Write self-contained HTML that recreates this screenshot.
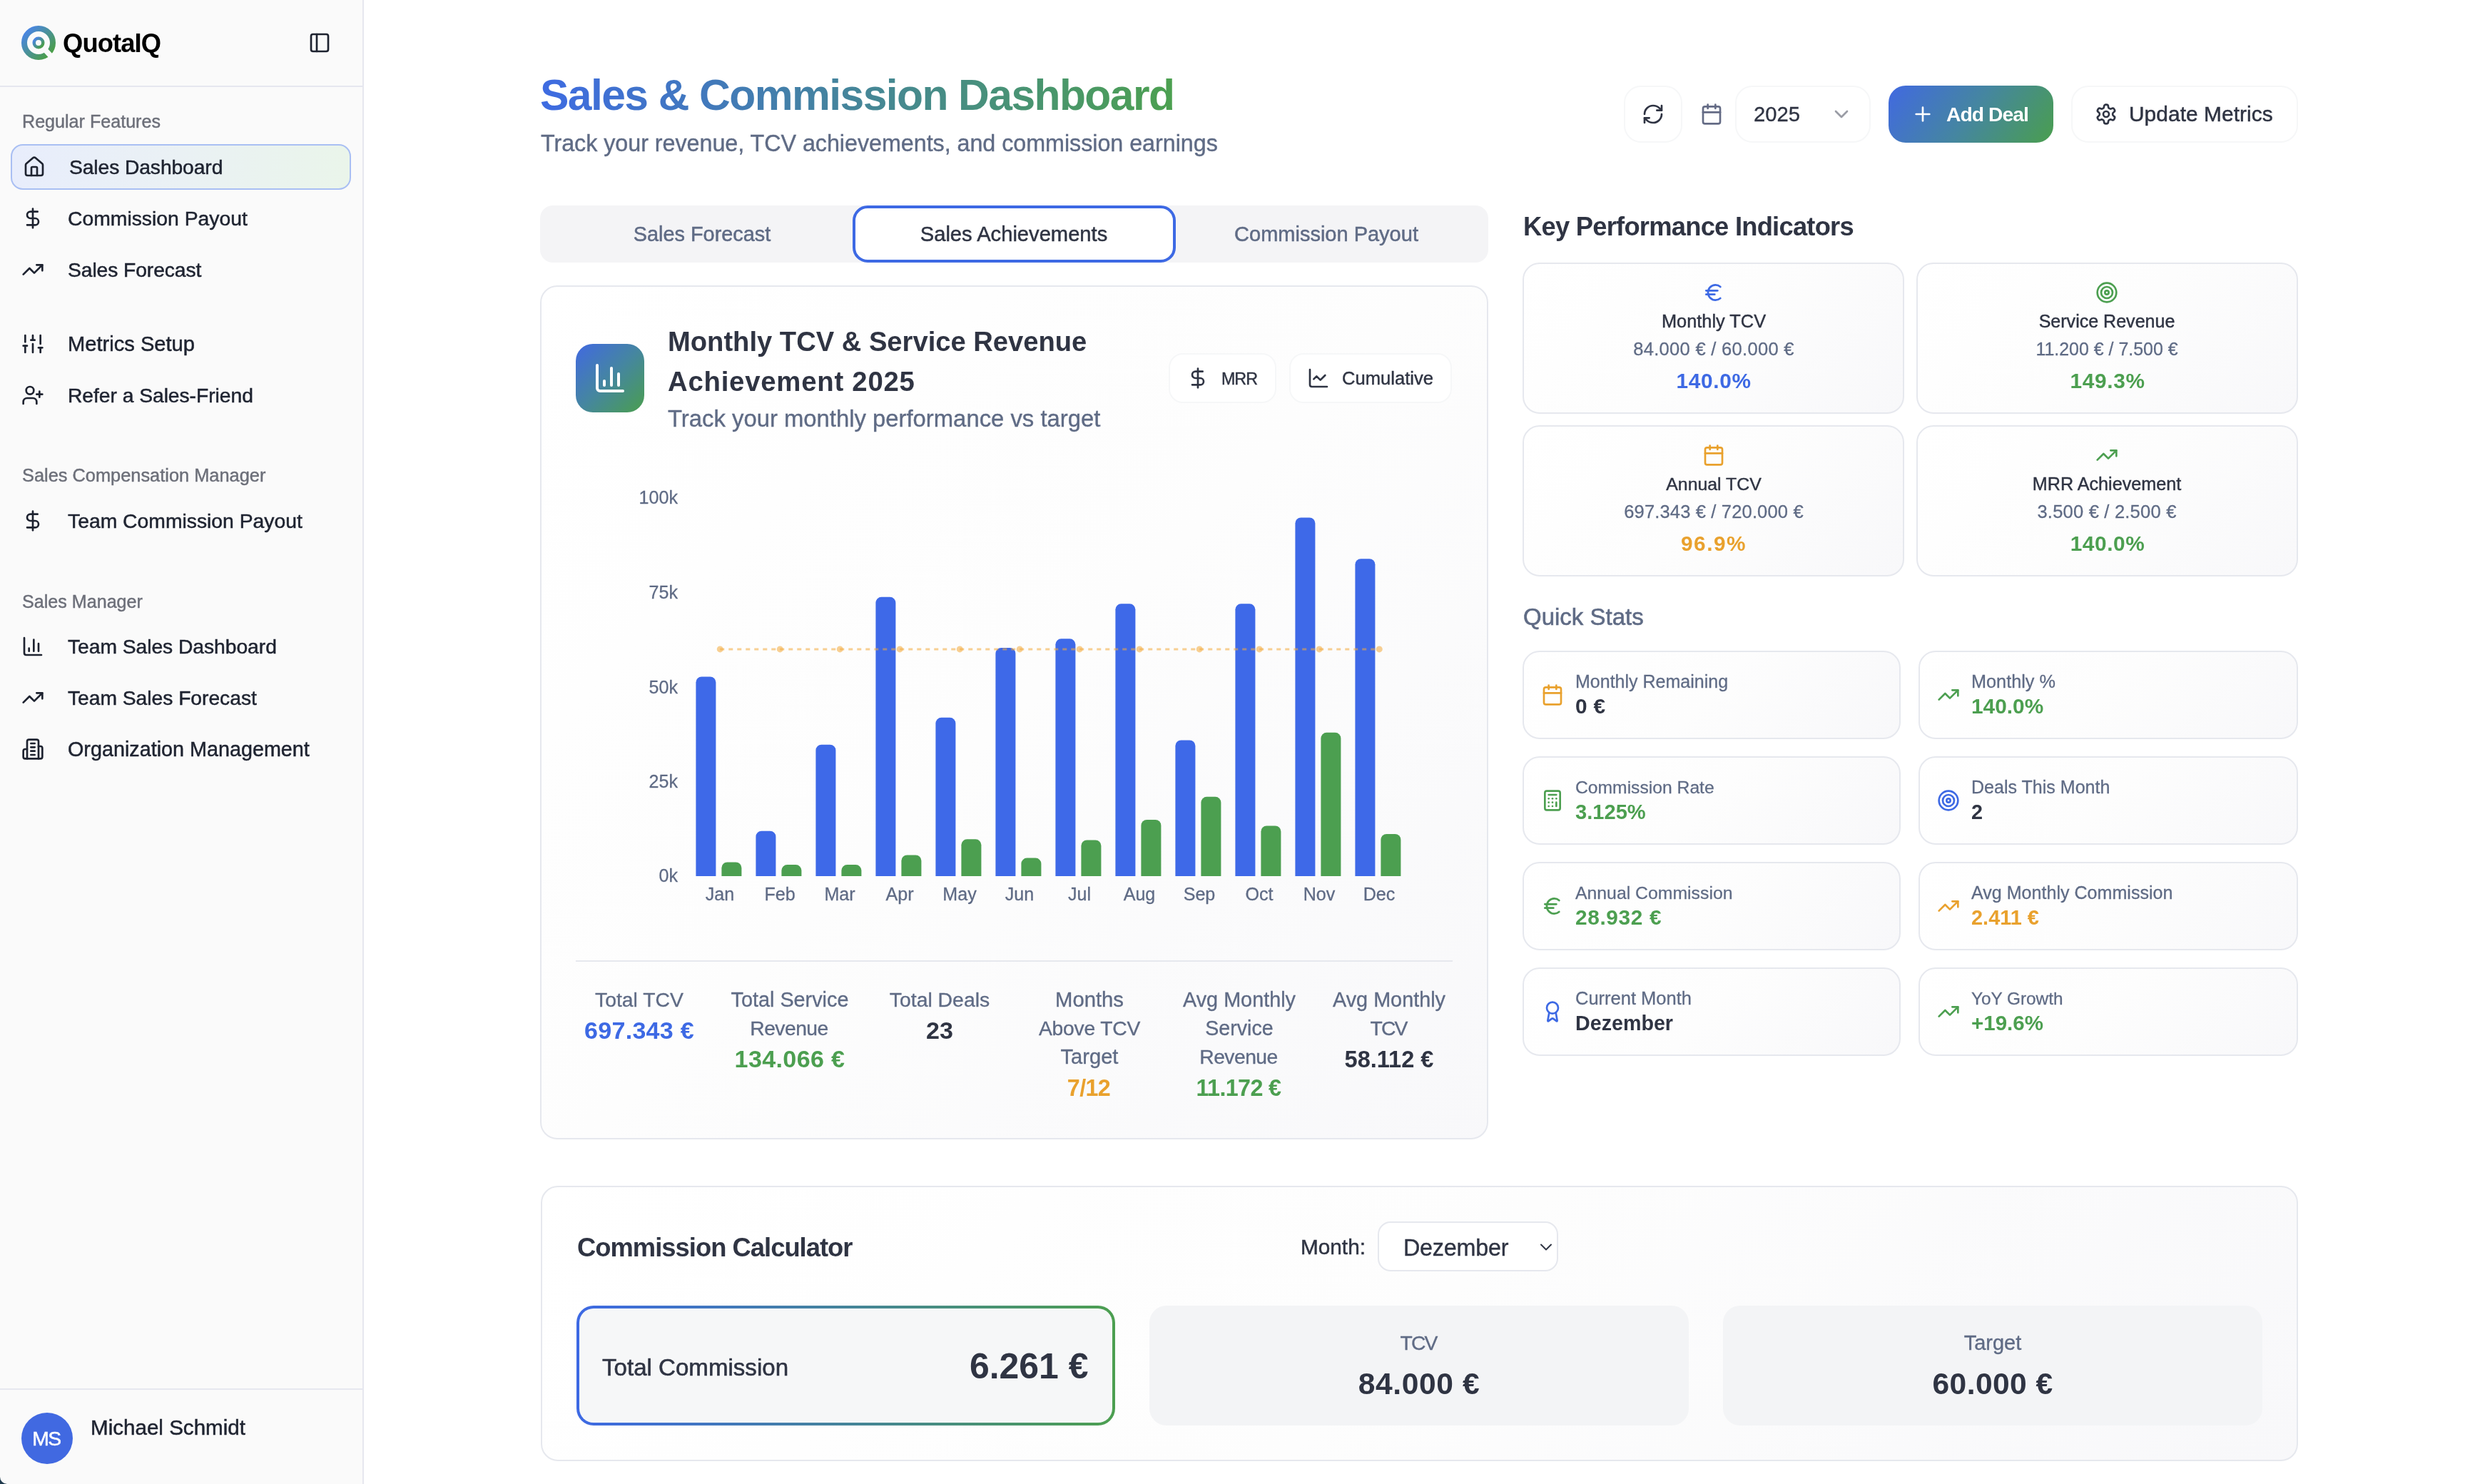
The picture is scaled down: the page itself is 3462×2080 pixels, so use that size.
<!DOCTYPE html>
<html lang="en"><head><meta charset="utf-8"><title>Sales &amp; Commission Dashboard</title>
<style>
html,body{margin:0;padding:0;}
body{width:3462px;height:2080px;position:relative;overflow:hidden;background:#fff;font-family:"Liberation Sans",sans-serif;}
body>div,body>svg,body>span{position:absolute;box-sizing:border-box;}
.t{white-space:nowrap;display:block;will-change:transform;}
</style></head><body>
<div style="left:0px;top:0px;width:510px;height:2080px;background:#fafafa;border-right:2px solid #e6e7ef;"></div><div style="left:0px;top:120px;width:508px;height:2px;background:#e6e7ef;"></div><div style="left:0px;top:1946px;width:508px;height:2px;background:#e6e7ef;"></div><svg style="left:30px;top:36px" width="48" height="48" viewBox="0 0 48 48"><defs><linearGradient id="lg" x1="0.1" y1="0.1" x2="0.9" y2="0.9"><stop offset="0" stop-color="#4a86e0"/><stop offset="1" stop-color="#4a9e48"/></linearGradient></defs><circle cx="24" cy="24" r="20" fill="none" stroke="url(#lg)" stroke-width="8"/><circle cx="24" cy="24" r="6.25" fill="none" stroke="url(#lg)" stroke-width="4.5"/><rect x="36" y="20.2" width="14" height="7.6" fill="#fafafa" transform="rotate(47 24 24)"/></svg><span class="t" style="top:38.00px;font-size:36.36px;line-height:45px;font-weight:700;color:#000;letter-spacing:-0.903px;left:88px;">QuotaIQ</span><svg style="left:431.5px;top:44px;" width="32" height="32" viewBox="0 0 24 24" fill="none" stroke="#1e2330" stroke-width="2" stroke-linecap="round" stroke-linejoin="round"><rect width="18" height="18" x="3" y="3" rx="2"/><path d="M9 3v18"/></svg><span class="t" style="top:154.00px;font-size:25.11px;line-height:32px;font-weight:400;color:#6c6f79;-webkit-text-stroke:0.43px;left:31px;">Regular Features</span><span class="t" style="top:650.00px;font-size:25.39px;line-height:32px;font-weight:400;color:#6c6f79;-webkit-text-stroke:0.43px;left:31px;">Sales Compensation Manager</span><span class="t" style="top:827.00px;font-size:25.12px;line-height:32px;font-weight:400;color:#6c6f79;-webkit-text-stroke:0.43px;left:31px;">Sales Manager</span><div style="left:14.5px;top:202px;width:477px;height:64px;border:2px solid #a9bff3;border-radius:17px;background:linear-gradient(90deg,#e8edfc 0%,#eaf1f4 50%,#eaf5ea 100%);"></div><svg style="left:32px;top:218px;" width="32" height="32" viewBox="0 0 24 24" fill="none" stroke="#1e2330" stroke-width="2" stroke-linecap="round" stroke-linejoin="round"><path d="M15 21v-8a1 1 0 0 0-1-1h-4a1 1 0 0 0-1 1v8"/><path d="M3 10a2 2 0 0 1 .709-1.528l7-5.999a2 2 0 0 1 2.582 0l7 5.999A2 2 0 0 1 21 10v9a2 2 0 0 1-2 2H5a2 2 0 0 1-2-2z"/></svg><span class="t" style="top:216.00px;font-size:28.28px;line-height:36px;font-weight:400;color:#1e2330;letter-spacing:-0.104px;-webkit-text-stroke:0.50px;left:97px;">Sales Dashboard</span><svg style="left:30px;top:290px;" width="32" height="32" viewBox="0 0 24 24" fill="none" stroke="#1e2330" stroke-width="2" stroke-linecap="round" stroke-linejoin="round"><line x1="12" x2="12" y1="2" y2="22"/><path d="M17 5H9.5a3.5 3.5 0 0 0 0 7h5a3.5 3.5 0 0 1 0 7H6"/></svg><span class="t" style="top:288.00px;font-size:28.34px;line-height:36px;font-weight:400;color:#1e2330;-webkit-text-stroke:0.50px;left:95px;">Commission Payout</span><svg style="left:30px;top:362px;" width="32" height="32" viewBox="0 0 24 24" fill="none" stroke="#1e2330" stroke-width="2" stroke-linecap="round" stroke-linejoin="round"><polyline points="22 7 13.5 15.5 8.5 10.5 2 17"/><polyline points="16 7 22 7 22 13"/></svg><span class="t" style="top:360.00px;font-size:28.28px;line-height:36px;font-weight:400;color:#1e2330;letter-spacing:-0.086px;-webkit-text-stroke:0.50px;left:95px;">Sales Forecast</span><svg style="left:30px;top:466px;" width="32" height="32" viewBox="0 0 24 24" fill="none" stroke="#1e2330" stroke-width="2" stroke-linecap="round" stroke-linejoin="round"><line x1="4" x2="4" y1="21" y2="14"/><line x1="4" x2="4" y1="10" y2="3"/><line x1="12" x2="12" y1="21" y2="12"/><line x1="12" x2="12" y1="8" y2="3"/><line x1="20" x2="20" y1="21" y2="16"/><line x1="20" x2="20" y1="12" y2="3"/><line x1="2" x2="6" y1="14" y2="14"/><line x1="10" x2="14" y1="8" y2="8"/><line x1="18" x2="22" y1="16" y2="16"/></svg><span class="t" style="top:464.00px;font-size:29.12px;line-height:36px;font-weight:400;color:#1e2330;-webkit-text-stroke:0.50px;left:95px;">Metrics Setup</span><svg style="left:30px;top:538px;" width="32" height="32" viewBox="0 0 24 24" fill="none" stroke="#1e2330" stroke-width="2" stroke-linecap="round" stroke-linejoin="round"><path d="M16 21v-2a4 4 0 0 0-4-4H6a4 4 0 0 0-4 4v2"/><circle cx="9" cy="7" r="4"/><line x1="19" x2="19" y1="8" y2="14"/><line x1="22" x2="16" y1="11" y2="11"/></svg><span class="t" style="top:536.00px;font-size:28.28px;line-height:36px;font-weight:400;color:#1e2330;letter-spacing:-0.049px;-webkit-text-stroke:0.50px;left:95px;">Refer a Sales-Friend</span><svg style="left:30px;top:714px;" width="32" height="32" viewBox="0 0 24 24" fill="none" stroke="#1e2330" stroke-width="2" stroke-linecap="round" stroke-linejoin="round"><line x1="12" x2="12" y1="2" y2="22"/><path d="M17 5H9.5a3.5 3.5 0 0 0 0 7h5a3.5 3.5 0 0 1 0 7H6"/></svg><span class="t" style="top:712.00px;font-size:28.32px;line-height:36px;font-weight:400;color:#1e2330;-webkit-text-stroke:0.50px;left:95px;">Team Commission Payout</span><svg style="left:30px;top:890px;" width="32" height="32" viewBox="0 0 24 24" fill="none" stroke="#1e2330" stroke-width="2" stroke-linecap="round" stroke-linejoin="round"><path d="M3 3v16a2 2 0 0 0 2 2h16"/><path d="M18 17V9"/><path d="M13 17V5"/><path d="M8 17v-3"/></svg><span class="t" style="top:888.00px;font-size:28.28px;line-height:36px;font-weight:400;color:#1e2330;letter-spacing:-0.050px;-webkit-text-stroke:0.50px;left:95px;">Team Sales Dashboard</span><svg style="left:30px;top:962px;" width="32" height="32" viewBox="0 0 24 24" fill="none" stroke="#1e2330" stroke-width="2" stroke-linecap="round" stroke-linejoin="round"><polyline points="22 7 13.5 15.5 8.5 10.5 2 17"/><polyline points="16 7 22 7 22 13"/></svg><span class="t" style="top:960.00px;font-size:28.28px;line-height:36px;font-weight:400;color:#1e2330;letter-spacing:-0.035px;-webkit-text-stroke:0.50px;left:95px;">Team Sales Forecast</span><svg style="left:30px;top:1034px;" width="32" height="32" viewBox="0 0 24 24" fill="none" stroke="#1e2330" stroke-width="2" stroke-linecap="round" stroke-linejoin="round"><path d="M6 22V4a2 2 0 0 1 2-2h8a2 2 0 0 1 2 2v18Z"/><path d="M6 12H4a2 2 0 0 0-2 2v6a2 2 0 0 0 2 2h2"/><path d="M18 9h2a2 2 0 0 1 2 2v9a2 2 0 0 1-2 2h-2"/><path d="M10 6h4"/><path d="M10 10h4"/><path d="M10 14h4"/><path d="M10 18h4"/></svg><span class="t" style="top:1032.00px;font-size:28.76px;line-height:36px;font-weight:400;color:#1e2330;-webkit-text-stroke:0.50px;left:95px;">Organization Management</span><div style="left:30px;top:1980px;width:72px;height:72px;background:#4169e1;border-radius:50%;"></div><span class="t" style="top:1998.00px;font-size:28.28px;line-height:36px;font-weight:400;color:#fff;letter-spacing:-1.420px;-webkit-text-stroke:0.50px;left:-934.71px;width:2000px;text-align:center;">MS</span><span class="t" style="top:1982.00px;font-size:29.58px;line-height:37px;font-weight:400;color:#1e2330;-webkit-text-stroke:0.50px;left:127px;">Michael Schmidt</span><svg style="left:0;top:2070px" width="10" height="10" viewBox="0 0 20 20"><path d="M0 0 V20 H20 A20 20 0 0 1 0 0Z" fill="#1f3a4d"/></svg><span class="t" style="top:97.00px;font-size:60.60px;line-height:72px;font-weight:700;color:#3d69e4;letter-spacing:-1.586px;left:757px;background:linear-gradient(90deg,#3e6be2 0%,#4ca050 100%);-webkit-background-clip:text;background-clip:text;color:transparent;">Sales &amp; Commission Dashboard</span><span class="t" style="top:181.00px;font-size:32.32px;line-height:40px;font-weight:400;color:#5f6b85;letter-spacing:-0.051px;-webkit-text-stroke:0.38px;left:758px;">Track your revenue, TCV achievements, and commission earnings</span><div style="left:2276px;top:120px;width:82px;height:80px;background:#fff;border:2px solid #f6f7f8;border-radius:24px;"></div><svg style="left:2301px;top:144px;" width="32" height="32" viewBox="0 0 24 24" fill="none" stroke="#2f3443" stroke-width="2" stroke-linecap="round" stroke-linejoin="round"><path d="M3 12a9 9 0 0 1 9-9 9.75 9.75 0 0 1 6.74 2.74L21 8"/><path d="M21 3v5h-5"/><path d="M21 12a9 9 0 0 1-9 9 9.75 9.75 0 0 1-6.74-2.74L3 16"/><path d="M8 16H3v5"/></svg><svg style="left:2383px;top:144px;" width="32" height="32" viewBox="0 0 24 24" fill="none" stroke="#646b85" stroke-width="2" stroke-linecap="round" stroke-linejoin="round"><path d="M8 2v4"/><path d="M16 2v4"/><rect width="18" height="18" x="3" y="4" rx="2"/><path d="M3 10h18"/></svg><div style="left:2432px;top:120px;width:190px;height:80px;background:#fff;border:2px solid #f6f7f8;border-radius:24px;"></div><span class="t" style="top:142.00px;font-size:29.21px;line-height:36px;font-weight:400;color:#2f3443;-webkit-text-stroke:0.34px;left:2458px;">2025</span><svg style="left:2565px;top:144px;" width="32" height="32" viewBox="0 0 24 24" fill="none" stroke="#9a9ca5" stroke-width="2" stroke-linecap="round" stroke-linejoin="round"><path d="m6 9 6 6 6-6"/></svg><div style="left:2647px;top:120px;width:231px;height:80px;background:linear-gradient(125deg,#4169e1 0%,#4586a0 50%,#4a9e4e 100%);border-radius:24px;"></div><svg style="left:2678.6px;top:144px;" width="32" height="32" viewBox="0 0 24 24" fill="none" stroke="#fff" stroke-width="2" stroke-linecap="round" stroke-linejoin="round"><path d="M5 12h14"/><path d="M12 5v14"/></svg><span class="t" style="top:142.00px;font-size:28.28px;line-height:36px;font-weight:700;color:#fff;letter-spacing:-0.939px;left:2728px;">Add Deal</span><div style="left:2902.5px;top:120px;width:318px;height:80px;background:#fff;border:2px solid #f6f7f8;border-radius:24px;"></div><svg style="left:2936px;top:144px;" width="32" height="32" viewBox="0 0 24 24" fill="none" stroke="#2f3443" stroke-width="2" stroke-linecap="round" stroke-linejoin="round"><path d="M12.22 2h-.44a2 2 0 0 0-2 2v.18a2 2 0 0 1-1 1.73l-.43.25a2 2 0 0 1-2 0l-.15-.08a2 2 0 0 0-2.73.73l-.22.38a2 2 0 0 0 .73 2.73l.15.1a2 2 0 0 1 1 1.72v.51a2 2 0 0 1-1 1.74l-.15.09a2 2 0 0 0-.73 2.73l.22.38a2 2 0 0 0 2.73.73l.15-.08a2 2 0 0 1 2 0l.43.25a2 2 0 0 1 1 1.73V20a2 2 0 0 0 2 2h.44a2 2 0 0 0 2-2v-.18a2 2 0 0 1 1-1.73l.43-.25a2 2 0 0 1 2 0l.15.08a2 2 0 0 0 2.73-.73l.22-.39a2 2 0 0 0-.73-2.73l-.15-.08a2 2 0 0 1-1-1.74v-.5a2 2 0 0 1 1-1.74l.15-.09a2 2 0 0 0 .73-2.73l-.22-.38a2 2 0 0 0-2.73-.73l-.15.08a2 2 0 0 1-2 0l-.43-.25a2 2 0 0 1-1-1.73V4a2 2 0 0 0-2-2z"/><circle cx="12" cy="12" r="3"/></svg><span class="t" style="top:141.00px;font-size:29.82px;line-height:37px;font-weight:400;color:#2f3443;letter-spacing:0.090px;-webkit-text-stroke:0.50px;left:2983.7px;">Update Metrics</span><div style="left:757px;top:288px;width:1329px;height:80px;background:#f4f4f6;border-radius:18px;"></div><div style="left:1194.5px;top:288px;width:453px;height:79.5px;background:#fff;border:4px solid #3d69e4;border-radius:21px;"></div><span class="t" style="top:310.00px;font-size:28.86px;line-height:36px;font-weight:400;color:#5f6b85;-webkit-text-stroke:0.50px;left:-16.25px;width:2000px;text-align:center;">Sales Forecast</span><span class="t" style="top:310.00px;font-size:29.17px;line-height:36px;font-weight:400;color:#2f3443;-webkit-text-stroke:0.50px;left:421.00px;width:2000px;text-align:center;">Sales Achievements</span><span class="t" style="top:310.00px;font-size:29.01px;line-height:36px;font-weight:400;color:#5f6b85;-webkit-text-stroke:0.50px;left:859.00px;width:2000px;text-align:center;">Commission Payout</span><div style="left:757px;top:400px;width:1329px;height:1197px;border:2px solid #e6e8ee;border-radius:24px;background:linear-gradient(135deg,#ffffff 0%,#fdfdfd 50%,#f8f8fa 100%);"></div><div style="left:807px;top:482px;width:96px;height:96px;background:linear-gradient(135deg,#4169e1 0%,#4586a0 50%,#4a9e4e 100%);border-radius:24px;"></div><svg style="left:831px;top:506px;" width="48" height="48" viewBox="0 0 24 24" fill="none" stroke="#fff" stroke-width="2" stroke-linecap="round" stroke-linejoin="round"><path d="M3 3v16a2 2 0 0 0 2 2h16"/><path d="M18 17V9"/><path d="M13 17V5"/><path d="M8 17v-3"/></svg><span class="t" style="top:455.00px;font-size:38.17px;line-height:47px;font-weight:700;color:#2f3443;left:936px;">Monthly TCV &amp; Service Revenue</span><span class="t" style="top:511.00px;font-size:38.34px;line-height:47px;font-weight:700;color:#2f3443;letter-spacing:0.759px;left:936px;">Achievement 2025</span><span class="t" style="top:566.00px;font-size:32.85px;line-height:41px;font-weight:400;color:#5f6b85;-webkit-text-stroke:0.38px;left:936px;">Track your monthly performance vs target</span><div style="left:1638px;top:495px;width:151px;height:70px;background:#fff;border:2px solid #f6f7f8;border-radius:20px;"></div><svg style="left:1662.7px;top:514px;" width="32" height="32" viewBox="0 0 24 24" fill="none" stroke="#2f3443" stroke-width="2" stroke-linecap="round" stroke-linejoin="round"><line x1="12" x2="12" y1="2" y2="22"/><path d="M17 5H9.5a3.5 3.5 0 0 0 0 7h5a3.5 3.5 0 0 1 0 7H6"/></svg><span class="t" style="top:516.00px;font-size:23.28px;line-height:30px;font-weight:400;color:#2f3443;letter-spacing:-1.008px;-webkit-text-stroke:0.43px;left:1712px;">MRR</span><div style="left:1807px;top:495px;width:228px;height:70px;background:#fff;border:2px solid #f6f7f8;border-radius:20px;"></div><svg style="left:1832px;top:514px;" width="32" height="32" viewBox="0 0 24 24" fill="none" stroke="#2f3443" stroke-width="2" stroke-linecap="round" stroke-linejoin="round"><path d="M3 3v16a2 2 0 0 0 2 2h16"/><path d="m19 9-5 5-4-4-3 3"/></svg><span class="t" style="top:514.00px;font-size:25.56px;line-height:32px;font-weight:400;color:#2f3443;letter-spacing:0.017px;-webkit-text-stroke:0.43px;left:1880.75px;">Cumulative</span><span class="t" style="top:1211.00px;font-size:25.08px;line-height:32px;font-weight:400;color:#5f6b85;-webkit-text-stroke:0.29px;left:-1050.00px;width:2000px;text-align:right;">0k</span><span class="t" style="top:1079.00px;font-size:25.08px;line-height:32px;font-weight:400;color:#5f6b85;-webkit-text-stroke:0.29px;left:-1050.00px;width:2000px;text-align:right;">25k</span><span class="t" style="top:947.00px;font-size:25.08px;line-height:32px;font-weight:400;color:#5f6b85;-webkit-text-stroke:0.29px;left:-1050.00px;width:2000px;text-align:right;">50k</span><span class="t" style="top:814.00px;font-size:25.08px;line-height:32px;font-weight:400;color:#5f6b85;-webkit-text-stroke:0.29px;left:-1050.00px;width:2000px;text-align:right;">75k</span><span class="t" style="top:681.00px;font-size:25.08px;line-height:32px;font-weight:400;color:#5f6b85;-webkit-text-stroke:0.29px;left:-1050.00px;width:2000px;text-align:right;">100k</span><svg style="left:0;top:0" width="3462" height="2080" viewBox="0 0 3462 2080"><path d="M975.4 1228V956.4a8 8 0 0 1 8 -8h12a8 8 0 0 1 8 8V1228Z" fill="#3e69e8"/><path d="M1011.4 1228V1216.4a8 8 0 0 1 8 -8h12a8 8 0 0 1 8 8V1228Z" fill="#4c9f50"/><path d="M1059.4 1228V1172.7a8 8 0 0 1 8 -8h12a8 8 0 0 1 8 8V1228Z" fill="#3e69e8"/><path d="M1095.4 1228V1220.1a8 8 0 0 1 8 -8h12a8 8 0 0 1 8 8V1228Z" fill="#4c9f50"/><path d="M1143.4 1228V1051.7a8 8 0 0 1 8 -8h12a8 8 0 0 1 8 8V1228Z" fill="#3e69e8"/><path d="M1179.4 1228V1220.1a8 8 0 0 1 8 -8h12a8 8 0 0 1 8 8V1228Z" fill="#4c9f50"/><path d="M1227.4 1228V844.8a8 8 0 0 1 8 -8h12a8 8 0 0 1 8 8V1228Z" fill="#3e69e8"/><path d="M1263.4 1228V1206.4a8 8 0 0 1 8 -8h12a8 8 0 0 1 8 8V1228Z" fill="#4c9f50"/><path d="M1311.4 1228V1013.8a8 8 0 0 1 8 -8h12a8 8 0 0 1 8 8V1228Z" fill="#3e69e8"/><path d="M1347.4 1228V1184.3a8 8 0 0 1 8 -8h12a8 8 0 0 1 8 8V1228Z" fill="#4c9f50"/><path d="M1395.4 1228V915.9a8 8 0 0 1 8 -8h12a8 8 0 0 1 8 8V1228Z" fill="#3e69e8"/><path d="M1431.4 1228V1210.6a8 8 0 0 1 8 -8h12a8 8 0 0 1 8 8V1228Z" fill="#4c9f50"/><path d="M1479.4 1228V903.3a8 8 0 0 1 8 -8h12a8 8 0 0 1 8 8V1228Z" fill="#3e69e8"/><path d="M1515.4 1228V1185.4a8 8 0 0 1 8 -8h12a8 8 0 0 1 8 8V1228Z" fill="#4c9f50"/><path d="M1563.4 1228V854.3a8 8 0 0 1 8 -8h12a8 8 0 0 1 8 8V1228Z" fill="#3e69e8"/><path d="M1599.4 1228V1156.9a8 8 0 0 1 8 -8h12a8 8 0 0 1 8 8V1228Z" fill="#4c9f50"/><path d="M1647.4 1228V1045.4a8 8 0 0 1 8 -8h12a8 8 0 0 1 8 8V1228Z" fill="#3e69e8"/><path d="M1683.4 1228V1124.8a8 8 0 0 1 8 -8h12a8 8 0 0 1 8 8V1228Z" fill="#4c9f50"/><path d="M1731.4 1228V854.3a8 8 0 0 1 8 -8h12a8 8 0 0 1 8 8V1228Z" fill="#3e69e8"/><path d="M1767.4 1228V1165.4a8 8 0 0 1 8 -8h12a8 8 0 0 1 8 8V1228Z" fill="#4c9f50"/><path d="M1815.4 1228V733.5a8 8 0 0 1 8 -8h12a8 8 0 0 1 8 8V1228Z" fill="#3e69e8"/><path d="M1851.4 1228V1034.8a8 8 0 0 1 8 -8h12a8 8 0 0 1 8 8V1228Z" fill="#4c9f50"/><path d="M1899.4 1228V791.2a8 8 0 0 1 8 -8h12a8 8 0 0 1 8 8V1228Z" fill="#3e69e8"/><path d="M1935.4 1228V1177.0a8 8 0 0 1 8 -8h12a8 8 0 0 1 8 8V1228Z" fill="#4c9f50"/><path d="M1009.25 909.9H1933.25" stroke="#f2a93b" stroke-opacity="0.55" stroke-width="3" stroke-dasharray="6 6" fill="none"/><circle cx="1009.25" cy="909.9" r="4.5" fill="#f2a93b" fill-opacity="0.55"/><circle cx="1093.25" cy="909.9" r="4.5" fill="#f2a93b" fill-opacity="0.55"/><circle cx="1177.25" cy="909.9" r="4.5" fill="#f2a93b" fill-opacity="0.55"/><circle cx="1261.25" cy="909.9" r="4.5" fill="#f2a93b" fill-opacity="0.55"/><circle cx="1345.25" cy="909.9" r="4.5" fill="#f2a93b" fill-opacity="0.55"/><circle cx="1429.25" cy="909.9" r="4.5" fill="#f2a93b" fill-opacity="0.55"/><circle cx="1513.25" cy="909.9" r="4.5" fill="#f2a93b" fill-opacity="0.55"/><circle cx="1597.25" cy="909.9" r="4.5" fill="#f2a93b" fill-opacity="0.55"/><circle cx="1681.25" cy="909.9" r="4.5" fill="#f2a93b" fill-opacity="0.55"/><circle cx="1765.25" cy="909.9" r="4.5" fill="#f2a93b" fill-opacity="0.55"/><circle cx="1849.25" cy="909.9" r="4.5" fill="#f2a93b" fill-opacity="0.55"/><circle cx="1933.25" cy="909.9" r="4.5" fill="#f2a93b" fill-opacity="0.55"/></svg><span class="t" style="top:1237.00px;font-size:25.08px;line-height:32px;font-weight:400;color:#5f6b85;-webkit-text-stroke:0.29px;left:9.00px;width:2000px;text-align:center;">Jan</span><span class="t" style="top:1237.00px;font-size:25.08px;line-height:32px;font-weight:400;color:#5f6b85;-webkit-text-stroke:0.29px;left:93.00px;width:2000px;text-align:center;">Feb</span><span class="t" style="top:1237.00px;font-size:25.08px;line-height:32px;font-weight:400;color:#5f6b85;-webkit-text-stroke:0.29px;left:177.00px;width:2000px;text-align:center;">Mar</span><span class="t" style="top:1237.00px;font-size:25.08px;line-height:32px;font-weight:400;color:#5f6b85;-webkit-text-stroke:0.29px;left:261.00px;width:2000px;text-align:center;">Apr</span><span class="t" style="top:1237.00px;font-size:25.08px;line-height:32px;font-weight:400;color:#5f6b85;-webkit-text-stroke:0.29px;left:345.00px;width:2000px;text-align:center;">May</span><span class="t" style="top:1237.00px;font-size:25.08px;line-height:32px;font-weight:400;color:#5f6b85;-webkit-text-stroke:0.29px;left:429.00px;width:2000px;text-align:center;">Jun</span><span class="t" style="top:1237.00px;font-size:25.08px;line-height:32px;font-weight:400;color:#5f6b85;-webkit-text-stroke:0.29px;left:513.00px;width:2000px;text-align:center;">Jul</span><span class="t" style="top:1237.00px;font-size:25.08px;line-height:32px;font-weight:400;color:#5f6b85;-webkit-text-stroke:0.29px;left:597.00px;width:2000px;text-align:center;">Aug</span><span class="t" style="top:1237.00px;font-size:25.08px;line-height:32px;font-weight:400;color:#5f6b85;-webkit-text-stroke:0.29px;left:681.00px;width:2000px;text-align:center;">Sep</span><span class="t" style="top:1237.00px;font-size:25.08px;line-height:32px;font-weight:400;color:#5f6b85;-webkit-text-stroke:0.29px;left:765.00px;width:2000px;text-align:center;">Oct</span><span class="t" style="top:1237.00px;font-size:25.08px;line-height:32px;font-weight:400;color:#5f6b85;-webkit-text-stroke:0.29px;left:849.00px;width:2000px;text-align:center;">Nov</span><span class="t" style="top:1237.00px;font-size:25.08px;line-height:32px;font-weight:400;color:#5f6b85;-webkit-text-stroke:0.29px;left:933.00px;width:2000px;text-align:center;">Dec</span><div style="left:807px;top:1346px;width:1229px;height:2px;background:#e6e8ee;"></div><span class="t" style="top:1383.00px;font-size:28.32px;line-height:36px;font-weight:400;color:#5f6b85;letter-spacing:0.000px;-webkit-text-stroke:0.34px;left:-103.70px;width:2000px;text-align:center;">Total TCV</span><span class="t" style="top:1423.00px;font-size:34.08px;line-height:42px;font-weight:700;color:#3d69e4;letter-spacing:0.248px;left:-103.58px;width:2000px;text-align:center;">697.343 €</span><span class="t" style="top:1383.00px;font-size:28.82px;line-height:36px;font-weight:400;color:#5f6b85;-webkit-text-stroke:0.34px;left:106.50px;width:2000px;text-align:center;">Total Service</span><span class="t" style="top:1423.00px;font-size:28.28px;line-height:36px;font-weight:400;color:#5f6b85;letter-spacing:-0.536px;-webkit-text-stroke:0.34px;left:106.23px;width:2000px;text-align:center;">Revenue</span><span class="t" style="top:1463.00px;font-size:34.08px;line-height:42px;font-weight:700;color:#4c9f50;letter-spacing:0.361px;left:106.68px;width:2000px;text-align:center;">134.066 €</span><span class="t" style="top:1383.00px;font-size:28.40px;line-height:36px;font-weight:400;color:#5f6b85;-webkit-text-stroke:0.34px;left:316.70px;width:2000px;text-align:center;">Total Deals</span><span class="t" style="top:1423.00px;font-size:34.08px;line-height:42px;font-weight:700;color:#2f3443;letter-spacing:0.093px;left:316.75px;width:2000px;text-align:center;">23</span><span class="t" style="top:1383.00px;font-size:29.27px;line-height:36px;font-weight:400;color:#5f6b85;-webkit-text-stroke:0.34px;left:526.70px;width:2000px;text-align:center;">Months</span><span class="t" style="top:1423.00px;font-size:28.28px;line-height:36px;font-weight:400;color:#5f6b85;letter-spacing:-0.200px;-webkit-text-stroke:0.34px;left:526.60px;width:2000px;text-align:center;">Above TCV</span><span class="t" style="top:1463.00px;font-size:29.14px;line-height:36px;font-weight:400;color:#5f6b85;-webkit-text-stroke:0.34px;left:526.70px;width:2000px;text-align:center;">Target</span><span class="t" style="top:1505.00px;font-size:32.32px;line-height:40px;font-weight:700;color:#e9a12d;letter-spacing:-0.635px;left:526.38px;width:2000px;text-align:center;">7/12</span><span class="t" style="top:1383.00px;font-size:28.81px;line-height:36px;font-weight:400;color:#5f6b85;-webkit-text-stroke:0.34px;left:736.70px;width:2000px;text-align:center;">Avg Monthly</span><span class="t" style="top:1423.00px;font-size:28.64px;line-height:36px;font-weight:400;color:#5f6b85;-webkit-text-stroke:0.34px;left:736.70px;width:2000px;text-align:center;">Service</span><span class="t" style="top:1463.00px;font-size:28.28px;line-height:36px;font-weight:400;color:#5f6b85;letter-spacing:-0.536px;-webkit-text-stroke:0.34px;left:736.43px;width:2000px;text-align:center;">Revenue</span><span class="t" style="top:1505.00px;font-size:32.32px;line-height:40px;font-weight:700;color:#4c9f50;letter-spacing:-0.646px;left:736.38px;width:2000px;text-align:center;">11.172 €</span><span class="t" style="top:1383.00px;font-size:28.81px;line-height:36px;font-weight:400;color:#5f6b85;-webkit-text-stroke:0.34px;left:946.70px;width:2000px;text-align:center;">Avg Monthly</span><span class="t" style="top:1423.00px;font-size:28.28px;line-height:36px;font-weight:400;color:#5f6b85;letter-spacing:-1.780px;-webkit-text-stroke:0.34px;left:945.81px;width:2000px;text-align:center;">TCV</span><span class="t" style="top:1465.00px;font-size:32.57px;line-height:40px;font-weight:700;color:#2f3443;left:946.70px;width:2000px;text-align:center;">58.112 €</span><span class="t" style="top:295.00px;font-size:36.36px;line-height:45px;font-weight:700;color:#2f3443;letter-spacing:-0.769px;left:2135px;">Key Performance Indicators</span><div style="left:2134px;top:368px;width:535px;height:211.5px;border:2px solid #e6e8ee;border-radius:24px;background:linear-gradient(135deg,#ffffff 0%,#fdfdfd 50%,#f8f8fa 100%);"></div><svg style="left:2385.5px;top:394px;" width="32" height="32" viewBox="0 0 24 24" fill="none" stroke="#3d69e4" stroke-width="2" stroke-linecap="round" stroke-linejoin="round"><path d="M4 10h12"/><path d="M4 14h9"/><path d="M19 6a7.7 7.7 0 0 0-5.2-2A7.9 7.9 0 0 0 6 12c0 4.4 3.5 8 7.8 8 2 0 3.8-.8 5.2-2"/></svg><span class="t" style="top:434.00px;font-size:25.38px;line-height:32px;font-weight:400;color:#2f3443;-webkit-text-stroke:0.43px;left:1401.50px;width:2000px;text-align:center;">Monthly TCV</span><span class="t" style="top:473.00px;font-size:25.56px;line-height:32px;font-weight:400;color:#5f6b85;letter-spacing:0.289px;-webkit-text-stroke:0.29px;left:1401.64px;width:2000px;text-align:center;">84.000 € / 60.000 €</span><span class="t" style="top:515.00px;font-size:29.82px;line-height:37px;font-weight:700;color:#3d69e4;letter-spacing:0.672px;left:1401.84px;width:2000px;text-align:center;">140.0%</span><div style="left:2685.5px;top:368px;width:535.5px;height:211.5px;border:2px solid #e6e8ee;border-radius:24px;background:linear-gradient(135deg,#ffffff 0%,#fdfdfd 50%,#f8f8fa 100%);"></div><svg style="left:2937.25px;top:394px;" width="32" height="32" viewBox="0 0 24 24" fill="none" stroke="#4c9f50" stroke-width="2" stroke-linecap="round" stroke-linejoin="round"><circle cx="12" cy="12" r="10"/><circle cx="12" cy="12" r="6"/><circle cx="12" cy="12" r="2"/></svg><span class="t" style="top:434.00px;font-size:25.05px;line-height:32px;font-weight:400;color:#2f3443;letter-spacing:0.000px;-webkit-text-stroke:0.43px;left:1953.25px;width:2000px;text-align:center;">Service Revenue</span><span class="t" style="top:473.00px;font-size:24.94px;line-height:32px;font-weight:400;color:#5f6b85;-webkit-text-stroke:0.29px;left:1953.25px;width:2000px;text-align:center;">11.200 € / 7.500 €</span><span class="t" style="top:515.00px;font-size:29.82px;line-height:37px;font-weight:700;color:#4c9f50;letter-spacing:0.672px;left:1953.59px;width:2000px;text-align:center;">149.3%</span><div style="left:2134px;top:596px;width:535px;height:211.5px;border:2px solid #e6e8ee;border-radius:24px;background:linear-gradient(135deg,#ffffff 0%,#fdfdfd 50%,#f8f8fa 100%);"></div><svg style="left:2385.5px;top:622px;" width="32" height="32" viewBox="0 0 24 24" fill="none" stroke="#e9a12d" stroke-width="2" stroke-linecap="round" stroke-linejoin="round"><path d="M8 2v4"/><path d="M16 2v4"/><rect width="18" height="18" x="3" y="4" rx="2"/><path d="M3 10h18"/></svg><span class="t" style="top:663.00px;font-size:24.84px;line-height:31px;font-weight:400;color:#2f3443;-webkit-text-stroke:0.43px;left:1401.50px;width:2000px;text-align:center;">Annual TCV</span><span class="t" style="top:701.00px;font-size:25.56px;line-height:32px;font-weight:400;color:#5f6b85;letter-spacing:0.139px;-webkit-text-stroke:0.29px;left:1401.57px;width:2000px;text-align:center;">697.343 € / 720.000 €</span><span class="t" style="top:743.00px;font-size:29.82px;line-height:37px;font-weight:700;color:#e9a12d;letter-spacing:1.483px;left:1402.24px;width:2000px;text-align:center;">96.9%</span><div style="left:2685.5px;top:596px;width:535.5px;height:211.5px;border:2px solid #e6e8ee;border-radius:24px;background:linear-gradient(135deg,#ffffff 0%,#fdfdfd 50%,#f8f8fa 100%);"></div><svg style="left:2937.25px;top:622px;" width="32" height="32" viewBox="0 0 24 24" fill="none" stroke="#4c9f50" stroke-width="2" stroke-linecap="round" stroke-linejoin="round"><polyline points="22 7 13.5 15.5 8.5 10.5 2 17"/><polyline points="16 7 22 7 22 13"/></svg><span class="t" style="top:662.00px;font-size:25.18px;line-height:32px;font-weight:400;color:#2f3443;-webkit-text-stroke:0.43px;left:1953.25px;width:2000px;text-align:center;">MRR Achievement</span><span class="t" style="top:701.00px;font-size:25.56px;line-height:32px;font-weight:400;color:#5f6b85;letter-spacing:0.196px;-webkit-text-stroke:0.29px;left:1953.35px;width:2000px;text-align:center;">3.500 € / 2.500 €</span><span class="t" style="top:743.00px;font-size:29.82px;line-height:37px;font-weight:700;color:#4c9f50;letter-spacing:0.572px;left:1953.54px;width:2000px;text-align:center;">140.0%</span><span class="t" style="top:844.00px;font-size:33.01px;line-height:41px;font-weight:400;color:#5f6b85;-webkit-text-stroke:0.58px;left:2135px;">Quick Stats</span><div style="left:2134px;top:912px;width:530px;height:124px;border:2px solid #e6e8ee;border-radius:24px;background:linear-gradient(135deg,#ffffff 0%,#fdfdfd 50%,#f8f8fa 100%);"></div><svg style="left:2160px;top:958px;" width="32" height="32" viewBox="0 0 24 24" fill="none" stroke="#e9a12d" stroke-width="2" stroke-linecap="round" stroke-linejoin="round"><path d="M8 2v4"/><path d="M16 2v4"/><rect width="18" height="18" x="3" y="4" rx="2"/><path d="M3 10h18"/></svg><span class="t" style="top:939.00px;font-size:25.03px;line-height:32px;font-weight:400;color:#5f6b85;-webkit-text-stroke:0.29px;left:2208px;">Monthly Remaining</span><span class="t" style="top:971.00px;font-size:29.82px;line-height:37px;font-weight:700;color:#2f3443;letter-spacing:0.266px;left:2208px;">0 €</span><div style="left:2689px;top:912px;width:532px;height:124px;border:2px solid #e6e8ee;border-radius:24px;background:linear-gradient(135deg,#ffffff 0%,#fdfdfd 50%,#f8f8fa 100%);"></div><svg style="left:2715px;top:958px;" width="32" height="32" viewBox="0 0 24 24" fill="none" stroke="#4c9f50" stroke-width="2" stroke-linecap="round" stroke-linejoin="round"><polyline points="22 7 13.5 15.5 8.5 10.5 2 17"/><polyline points="16 7 22 7 22 13"/></svg><span class="t" style="top:939.00px;font-size:25.28px;line-height:32px;font-weight:400;color:#5f6b85;letter-spacing:-0.000px;-webkit-text-stroke:0.29px;left:2763px;">Monthly %</span><span class="t" style="top:971.00px;font-size:29.82px;line-height:37px;font-weight:700;color:#4c9f50;letter-spacing:0.022px;left:2763px;">140.0%</span><div style="left:2134px;top:1060px;width:530px;height:124px;border:2px solid #e6e8ee;border-radius:24px;background:linear-gradient(135deg,#ffffff 0%,#fdfdfd 50%,#f8f8fa 100%);"></div><svg style="left:2160px;top:1106px;" width="32" height="32" viewBox="0 0 24 24" fill="none" stroke="#4c9f50" stroke-width="2" stroke-linecap="round" stroke-linejoin="round"><rect width="16" height="20" x="4" y="2" rx="2"/><line x1="8" x2="16" y1="6" y2="6"/><line x1="16" x2="16" y1="14" y2="18"/><path d="M16 10h.01"/><path d="M12 10h.01"/><path d="M8 10h.01"/><path d="M12 14h.01"/><path d="M8 14h.01"/><path d="M12 18h.01"/><path d="M8 18h.01"/></svg><span class="t" style="top:1088.00px;font-size:24.68px;line-height:31px;font-weight:400;color:#5f6b85;-webkit-text-stroke:0.29px;left:2208px;">Commission Rate</span><span class="t" style="top:1120.00px;font-size:29.11px;line-height:36px;font-weight:700;color:#4c9f50;left:2208px;">3.125%</span><div style="left:2689px;top:1060px;width:532px;height:124px;border:2px solid #e6e8ee;border-radius:24px;background:linear-gradient(135deg,#ffffff 0%,#fdfdfd 50%,#f8f8fa 100%);"></div><svg style="left:2715px;top:1106px;" width="32" height="32" viewBox="0 0 24 24" fill="none" stroke="#3d69e4" stroke-width="2" stroke-linecap="round" stroke-linejoin="round"><circle cx="12" cy="12" r="10"/><circle cx="12" cy="12" r="6"/><circle cx="12" cy="12" r="2"/></svg><span class="t" style="top:1087.00px;font-size:25.05px;line-height:32px;font-weight:400;color:#5f6b85;-webkit-text-stroke:0.29px;left:2763px;">Deals This Month</span><span class="t" style="top:1120.00px;font-size:28.84px;line-height:36px;font-weight:700;color:#2f3443;left:2763px;">2</span><div style="left:2134px;top:1208px;width:530px;height:124px;border:2px solid #e6e8ee;border-radius:24px;background:linear-gradient(135deg,#ffffff 0%,#fdfdfd 50%,#f8f8fa 100%);"></div><svg style="left:2160px;top:1254px;" width="32" height="32" viewBox="0 0 24 24" fill="none" stroke="#4c9f50" stroke-width="2" stroke-linecap="round" stroke-linejoin="round"><path d="M4 10h12"/><path d="M4 14h9"/><path d="M19 6a7.7 7.7 0 0 0-5.2-2A7.9 7.9 0 0 0 6 12c0 4.4 3.5 8 7.8 8 2 0 3.8-.8 5.2-2"/></svg><span class="t" style="top:1236.00px;font-size:24.80px;line-height:31px;font-weight:400;color:#5f6b85;-webkit-text-stroke:0.29px;left:2208px;">Annual Commission</span><span class="t" style="top:1267.00px;font-size:29.82px;line-height:37px;font-weight:700;color:#4c9f50;letter-spacing:0.631px;left:2208px;">28.932 €</span><div style="left:2689px;top:1208px;width:532px;height:124px;border:2px solid #e6e8ee;border-radius:24px;background:linear-gradient(135deg,#ffffff 0%,#fdfdfd 50%,#f8f8fa 100%);"></div><svg style="left:2715px;top:1254px;" width="32" height="32" viewBox="0 0 24 24" fill="none" stroke="#e9a12d" stroke-width="2" stroke-linecap="round" stroke-linejoin="round"><polyline points="22 7 13.5 15.5 8.5 10.5 2 17"/><polyline points="16 7 22 7 22 13"/></svg><span class="t" style="top:1235.00px;font-size:25.08px;line-height:32px;font-weight:400;color:#5f6b85;letter-spacing:0.000px;-webkit-text-stroke:0.29px;left:2763px;">Avg Monthly Commission</span><span class="t" style="top:1268.00px;font-size:28.95px;line-height:36px;font-weight:700;color:#e9a12d;left:2763px;">2.411 €</span><div style="left:2134px;top:1356px;width:530px;height:124px;border:2px solid #e6e8ee;border-radius:24px;background:linear-gradient(135deg,#ffffff 0%,#fdfdfd 50%,#f8f8fa 100%);"></div><svg style="left:2160px;top:1402px;" width="32" height="32" viewBox="0 0 24 24" fill="none" stroke="#3d69e4" stroke-width="2" stroke-linecap="round" stroke-linejoin="round"><path d="m15.477 12.89 1.515 8.526a.5.5 0 0 1-.81.47l-3.58-2.687a1 1 0 0 0-1.197 0l-3.586 2.686a.5.5 0 0 1-.81-.469l1.514-8.526"/><circle cx="12" cy="8" r="6"/></svg><span class="t" style="top:1383.00px;font-size:25.50px;line-height:32px;font-weight:400;color:#5f6b85;-webkit-text-stroke:0.29px;left:2208px;">Current Month</span><span class="t" style="top:1416.00px;font-size:28.66px;line-height:36px;font-weight:700;color:#2f3443;left:2208px;">Dezember</span><div style="left:2689px;top:1356px;width:532px;height:124px;border:2px solid #e6e8ee;border-radius:24px;background:linear-gradient(135deg,#ffffff 0%,#fdfdfd 50%,#f8f8fa 100%);"></div><svg style="left:2715px;top:1402px;" width="32" height="32" viewBox="0 0 24 24" fill="none" stroke="#4c9f50" stroke-width="2" stroke-linecap="round" stroke-linejoin="round"><polyline points="22 7 13.5 15.5 8.5 10.5 2 17"/><polyline points="16 7 22 7 22 13"/></svg><span class="t" style="top:1384.00px;font-size:24.33px;line-height:31px;font-weight:400;color:#5f6b85;-webkit-text-stroke:0.29px;left:2763px;">YoY Growth</span><span class="t" style="top:1415.00px;font-size:29.54px;line-height:37px;font-weight:700;color:#4c9f50;left:2763px;">+19.6%</span><div style="left:758px;top:1662px;width:2463px;height:386px;border:2px solid #e6e8ee;border-radius:24px;background:linear-gradient(135deg,#ffffff 0%,#fdfdfd 50%,#f8f8fa 100%);"></div><span class="t" style="top:1726.00px;font-size:36.36px;line-height:45px;font-weight:700;color:#2f3443;letter-spacing:-0.981px;left:808.5px;">Commission Calculator</span><span class="t" style="top:1729.00px;font-size:29.76px;line-height:37px;font-weight:400;color:#2f3443;-webkit-text-stroke:0.50px;left:1823.25px;">Month:</span><div style="left:1931px;top:1712px;width:252.5px;height:69.5px;background:#fff;border:2px solid #e6e8ee;border-radius:18px;"></div><span class="t" style="top:1729.00px;font-size:32.32px;line-height:40px;font-weight:400;color:#2f3443;letter-spacing:-0.226px;-webkit-text-stroke:0.38px;left:1966.75px;">Dezember</span><svg style="left:2152.5px;top:1733.5px;" width="28" height="28" viewBox="0 0 24 24" fill="none" stroke="#2f3443" stroke-width="1.7" stroke-linecap="round" stroke-linejoin="round"><path d="m6 9 6 6 6-6"/></svg><div style="left:807.5px;top:1830px;width:755px;height:167.5px;border-radius:24px;background:linear-gradient(#f6f7f8,#f6f7f8) padding-box,linear-gradient(90deg,#3d69e4,#4c9f50) border-box;border:4px solid transparent;"></div><span class="t" style="top:1896.00px;font-size:33.08px;line-height:41px;font-weight:400;color:#2f3443;-webkit-text-stroke:0.58px;left:844px;">Total Commission</span><span class="t" style="top:1885.00px;font-size:49.90px;line-height:60px;font-weight:700;color:#2f3443;left:1358.5px;">6.261 €</span><div style="left:1611px;top:1830px;width:755.5px;height:167.5px;background:#f3f4f6;border-radius:24px;"></div><div style="left:2415px;top:1830px;width:755.5px;height:167.5px;background:#f3f4f6;border-radius:24px;"></div><span class="t" style="top:1864.00px;font-size:28.28px;line-height:36px;font-weight:400;color:#5f6b85;letter-spacing:-1.780px;-webkit-text-stroke:0.34px;left:988.11px;width:2000px;text-align:center;">TCV</span><span class="t" style="top:1913.00px;font-size:42.60px;line-height:52px;font-weight:700;color:#2f3443;letter-spacing:0.568px;left:989.28px;width:2000px;text-align:center;">84.000 €</span><span class="t" style="top:1864.00px;font-size:29.00px;line-height:36px;font-weight:400;color:#5f6b85;-webkit-text-stroke:0.34px;left:1793.00px;width:2000px;text-align:center;">Target</span><span class="t" style="top:1913.00px;font-size:42.60px;line-height:52px;font-weight:700;color:#2f3443;letter-spacing:0.397px;left:1793.20px;width:2000px;text-align:center;">60.000 €</span>
</body></html>
